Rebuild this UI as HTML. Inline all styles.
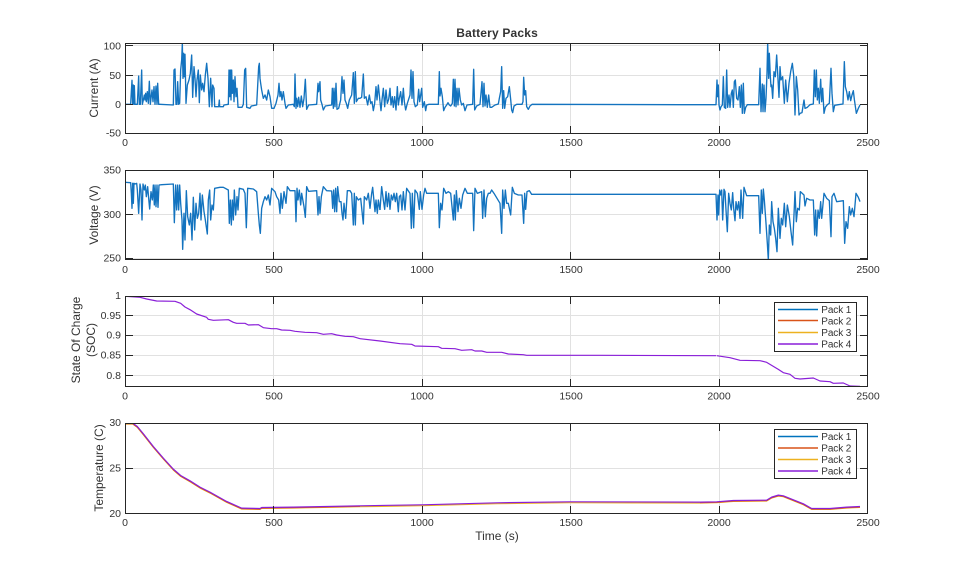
<!DOCTYPE html>
<html><head><meta charset="utf-8"><style>
html,body{margin:0;padding:0;background:#fff;width:959px;height:577px;overflow:hidden}
svg{display:block}
text{font-family:"Liberation Sans",Arial,sans-serif;fill:#333;font-size:10.5px}
.g{stroke:#e1e1e1;stroke-width:1;fill:none}
.a{stroke:#262626;stroke-width:1;fill:none}
.b{fill:none;stroke:#1373BF;stroke-width:1.35;stroke-linejoin:round;vector-effect:non-scaling-stroke}
.l{fill:none;stroke-width:1.2;stroke-linejoin:round;vector-effect:non-scaling-stroke}
.r{text-anchor:end}.lab{font-size:12px}
.k{stroke-width:1.5}
.t{font-size:10px}
</style></head><body>
<svg width="959" height="577" viewBox="0 0 959 577" xmlns="http://www.w3.org/2000/svg">
<defs>
<clipPath id="c1"><rect x="125" y="43" width="743" height="91"/></clipPath>
<clipPath id="c2"><rect x="125" y="170" width="743" height="90"/></clipPath>
<clipPath id="c3"><rect x="125" y="296" width="743" height="91"/></clipPath>
<clipPath id="c4"><rect x="125" y="423" width="743" height="91"/></clipPath>
</defs>

<!-- Grids -->
<path class="g" d="M273.5 44V133M422.5 44V133M570.5 44V133M719.5 44V133M126 45.5H867M126 75.5H867M126 104.5H867"/>
<path class="g" d="M273.5 171V259M422.5 171V259M570.5 171V259M719.5 171V259M126 214.5H867M126 258.5H867"/>
<path class="g" d="M273.5 296V386M422.5 296V386M570.5 296V386M719.5 296V386M126 315.5H867M126 335.5H867M126 355.5H867M126 375.5H867"/>
<path class="g" d="M273.5 423V513M422.5 423V513M570.5 423V513M719.5 423V513M126 468.5H867"/>

<!-- Current -->
<g clip-path="url(#c1)">
<polyline class="b" transform="translate(80 20) scale(.33333)" points="136,253 152,253 154,215 156,181 158,253 160,195 162,253 163,197 165,253 172,253 176,168 178,253 181,253 185,150 187,253 190,240 193,225 195,240 197,220 199,245 202,215 205,250 208,184 211,253 213,235 216,210 219,245 222,200 225,253 228,198 231,253 233,190 236,253 240,253 280,255 282,150 285,147 288,253 291,253 293,185 296,253 299,250 302,150 305,120 307,70 309,175 311,100 313,170 315,103 318,250 322,195 327,180 331,160 335,105 338,232 342,140 345,175 348,230 351,180 355,150 358,248 361,165 365,210 368,190 372,215 376,165 380,130 384,175 388,260 392,175 396,260 398,195 402,205 404,260 416,260 418,240 419,260 430,260 432,255 445,253 447,150 449,230 451,150 453,240 455,150 457,220 460,180 462,245 465,170 468,230 471,205 474,262 486,262 490,253 494,150 497,145 500,262 510,265 514,258 530,255 536,140 538,130 540,175 542,190 545,210 550,235 555,225 560,240 565,210 570,230 575,265 582,265 588,250 594,225 597,190 600,230 603,215 606,240 610,215 615,250 618,265 625,255 640,253 643,260 645,162 648,265 650,235 653,260 656,232 660,262 664,228 668,260 672,235 676,178 680,268 686,255 710,253 714,190 716,215 720,185 722,240 726,253 730,270 736,258 755,255 757,205 760,265 762,205 765,260 768,190 771,268 776,265 782,240 786,170 789,220 792,180 795,240 799,250 803,265 808,240 815,225 820,158 823,250 826,155 829,245 835,235 840,235 845,232 850,162 853,235 858,230 863,255 868,225 872,250 876,245 880,272 884,250 888,200 891,240 895,195 900,245"/>
<polyline class="b" transform="translate(380 20) scale(.33333)" points="0,245 3,272 6,240 10,205 14,260 18,210 22,250 26,238 30,205 33,255 37,230 40,262 44,230 48,270 52,200 55,255 58,235 62,215 66,255 70,205 73,245 77,270 82,250 90,225 93,150 96,235 99,155 102,245 106,260 112,255 116,208 119,245 125,205 128,262 133,245 137,272 140,255 147,253 175,253 178,155 180,228 183,205 187,230 191,272 195,262 200,255 204,248 208,255 212,258 217,250 220,178 223,258 225,178 228,260 231,205 234,255 237,205 241,240 245,255 250,250 255,272 261,255 278,253 281,148 284,270 290,258 300,253 306,185 309,260 312,190 315,258 318,225 322,262 326,225 330,262 335,262 345,255 355,252 358,235 362,215 365,140 368,265 371,212 374,265 378,235 383,230 388,200 392,238 395,270 398,278 402,258 410,253 426,253 429,245 431,172 434,225 437,212 440,260 445,268 450,258 456,253 900,254"/>
<polyline class="b" transform="translate(680 20) scale(.33333)" points="0,254 108,254 111,180 113,230 115,195 117,255 120,270 123,260 127,255 130,170 133,262 137,265 140,150 143,262 147,225 150,262 154,220 157,210 160,262 163,185 166,180 170,235 174,240 178,200 181,262 184,195 187,280 190,190 193,280 197,262 202,254 236,254 240,145 243,275 247,192 249,275 252,195 255,275 258,235 261,160 263,70 266,175 268,100 271,170 273,200 275,195 278,235 282,155 286,170 290,105 293,160 297,232 300,140 303,180 308,170 313,250 317,180 322,245 327,190 332,155 337,130 341,165 345,285 349,170 353,210 357,285 360,280 366,278 372,240 375,265 382,262 390,254 400,252 403,150 406,230 409,150 412,240 415,205 418,250 422,178 425,245 428,205 432,280 436,262 442,254 448,250 453,145 456,220 460,275 464,256 475,254 489,252 493,125 496,200 500,215 504,240 508,215 512,242 516,225 520,212 523,238 529,280 535,265 540,255"/>
</g>

<!-- Voltage -->
<g clip-path="url(#c2)">
<polyline class="b" transform="translate(80 160) scale(.33333)" points="136,67 152,68 154,100 156,145 158,70 160,130 162,70 165,72 170,70 172,90 176,160 180,72 183,90 186,180 189,72 193,90 196,75 199,110 203,80 206,115 209,147 213,95 217,120 220,75 223,135 225,75 228,140 231,75 234,142 237,75 245,74 280,72 283,188 287,75 290,150 293,75 296,150 299,75 302,130 306,180 308,268 312,160 315,240 319,92 323,170 328,195 332,160 336,240 340,112 344,210 348,130 352,175 356,160 360,100 363,180 367,105 372,155 376,180 382,222 385,120 389,90 392,180 396,135 400,150 404,85 420,82 430,82 445,90 448,190 451,120 454,195 457,120 460,180 463,90 467,165 471,110 474,150 478,85 490,88 495,100 499,203 503,85 520,87 530,95 535,160 538,195 541,220 545,145 550,125 555,110 560,120 565,105 570,135 575,85 585,95 590,110 596,120 600,160 603,100 607,145 612,95 618,130 622,80 630,92 645,92 648,185 651,85 654,120 658,90 662,135 665,100 672,140 676,172 680,80 686,94 710,92 714,165 717,110 720,160 724,110 730,80 740,92 755,93 758,145 761,90 764,155 767,85 770,155 773,80 778,125 783,125 786,160 789,180 792,130 797,175 802,92 810,92 815,100 820,195 823,100 826,195 829,110 835,120 842,115 850,192 853,110 860,120 865,100 870,145 875,100 878,82 885,155 888,120 892,160 895,120 900,150"/>
<polyline class="b" transform="translate(380 160) scale(.33333)" points="0,150 5,80 10,120 14,148 18,95 22,140 26,100 30,148 34,105 38,120 42,100 46,125 50,100 55,155 58,110 62,105 66,150 70,95 75,150 80,85 90,100 94,205 97,100 101,203 105,90 112,100 118,148 121,95 126,148 131,105 135,85 140,100 150,100 175,100 178,203 182,130 186,150 191,85 198,100 205,95 212,100 220,180 223,105 226,180 229,92 234,155 238,115 243,145 248,105 255,85 262,100 278,100 281,212 285,85 292,100 305,95 308,175 312,90 316,170 320,115 325,100 330,100 335,90 342,100 360,130 365,220 368,90 372,145 376,90 380,130 385,130 392,165 397,82 403,100 415,105 426,105 431,190 434,100 437,148 441,95 448,92 455,103 900,103"/>
<polyline class="b" transform="translate(680 160) scale(.33333)" points="0,103 108,103 111,180 114,105 116,165 119,90 122,105 125,90 128,180 132,88 135,95 138,150 142,215 146,100 150,130 154,150 158,98 161,145 165,182 168,125 172,150 176,125 180,175 183,90 188,175 192,82 200,107 236,107 240,220 244,90 247,160 250,87 253,120 258,190 262,250 265,300 268,195 272,225 275,125 279,185 283,205 287,235 291,275 295,145 300,235 304,175 308,195 313,130 317,200 322,135 328,170 333,215 338,255 345,95 349,185 353,145 358,150 361,95 372,105 375,138 380,115 390,120 400,120 404,225 407,150 410,228 414,150 418,175 422,125 425,175 432,100 440,115 448,122 453,230 456,110 462,100 470,125 490,122 494,250 498,185 503,205 508,140 512,165 517,145 522,170 528,100 535,112 540,125"/>
</g>

<!-- SOC -->
<g clip-path="url(#c3)">
<polyline class="l" stroke="#8A1FD8" transform="translate(60 285) scale(.33333)" points="196,34 240,37 260,42 290,48 345,49 362,55 375,66 390,74 410,87 440,97 445,103 460,106 505,104 520,112 530,115 555,115 565,120 595,119 610,128 635,131 650,131 665,135 690,136 705,139 735,142 770,143 790,148 815,146 830,150 855,154 880,155 900,161"/>
<polyline class="l" stroke="#8A1FD8" points="360,338.7 380,341 400,343.7 411.7,344.3 415,346 438.3,346.7 441.7,348.3 455,348.7 461.7,350.3 471.7,349.7 475,351 481.7,351 486.7,352.3 501.7,352.3 508.3,354 523.3,354.7 526.7,355.3 600,355.3 716,355.7"/>
<polyline class="l" stroke="#8A1FD8" transform="translate(700 285) scale(.33333)" points="50,212 90,218 120,226 180,227 200,232 235,253 250,263 270,268 285,280 300,282 340,279 360,288 390,290 400,295 430,294 450,303 480,304"/>
</g>

<!-- Temperature -->
<g clip-path="url(#c4)">
<g transform="translate(0 .7)">
<polyline class="l" stroke="#EDB120" transform="translate(60 410) scale(.33333)" points="196,40 218,40 232,50 250,72 280,110 310,145 340,178 362,197 390,213 420,232 450,247 500,275 545,295 600,296 605,293 700,292 900,288"/>
<polyline class="l" stroke="#EDB120" points="360,506 422,505 497,503 570,502 700,502.3"/>
<polyline class="l" stroke="#EDB120" transform="translate(700 410) scale(.33333)" points="0,277 50,276 100,272 200,271 215,262 235,256 250,258 280,270 310,282 335,296 390,296 440,292 480,290"/>
</g>
<g transform="translate(0 .3)">
<polyline class="l" stroke="#D95319" transform="translate(60 410) scale(.33333)" points="196,40 218,40 232,50 250,72 280,110 310,145 340,178 362,197 390,213 420,232 450,247 500,275 545,295 600,296 605,293 700,292 900,288"/>
<polyline class="l" stroke="#D95319" transform="translate(700 410) scale(.33333)" points="0,277 50,276 100,272 200,271 215,262 235,256 250,258 280,270 310,282 335,296 390,296 440,292 480,290"/>
</g>
<g transform="translate(0 -.2)">
<polyline class="l" stroke="#8A1FD8" transform="translate(60 410) scale(.33333)" points="196,40 218,40 232,50 250,72 280,110 310,145 340,178 362,197 390,213 420,232 450,247 500,275 545,295 600,296 605,293 700,292 900,288"/>
<polyline class="l" stroke="#8A1FD8" points="360,506 422,505 497,503 570,502 700,502.3"/>
<polyline class="l" stroke="#8A1FD8" transform="translate(700 410) scale(.33333)" points="0,277 50,276 100,272 200,271 215,262 235,256 250,258 280,270 310,282 335,296 390,296 440,292 480,290"/>
</g>
</g>

<!-- Axes boxes & ticks -->
<rect class="a" x="125.5" y="43.5" width="742" height="90"/>
<path class="a" d="M273.5 44v7M422.5 44v7M570.5 44v7M719.5 44v7M273.5 133v-7M422.5 133v-7M570.5 133v-7M719.5 133v-7M126 45.5h7M126 75.5h7M126 104.5h7M867 45.5h-7M867 75.5h-7M867 104.5h-7"/>
<rect class="a" x="125.5" y="170.5" width="742" height="89"/>
<path class="a" d="M273.5 171v7M422.5 171v7M570.5 171v7M719.5 171v7M273.5 259v-7M422.5 259v-7M570.5 259v-7M719.5 259v-7M126 214.5h7M126 258.5h7M867 214.5h-7M867 258.5h-7"/>
<rect class="a" x="125.5" y="296.5" width="742" height="90"/>
<path class="a" d="M273.5 297v7M422.5 297v7M570.5 297v7M719.5 297v7M273.5 386v-7M422.5 386v-7M570.5 386v-7M719.5 386v-7M126 315.5h7M126 335.5h7M126 355.5h7M126 375.5h7M867 315.5h-7M867 335.5h-7M867 355.5h-7M867 375.5h-7"/>
<rect class="a" x="125.5" y="423.5" width="742" height="90"/>
<path class="a" d="M273.5 424v7M422.5 424v7M570.5 424v7M719.5 424v7M273.5 513v-7M422.5 513v-7M570.5 513v-7M719.5 513v-7M126 468.5h7M867 468.5h-7"/>

<!-- Legends -->
<rect x="774.5" y="302.5" width="82" height="49" fill="#fff" stroke="#262626"/>
<path class="k" d="M778 309.5h40" stroke="#0072BD"/>
<path class="k" d="M778 320.5h40" stroke="#D95319"/>
<path class="k" d="M778 332.5h40" stroke="#EDB120"/>
<path class="k" d="M778 344h40" stroke="#8A1FD8"/>
<text class="t" x="821.3" y="313" textLength="30">Pack 1</text>
<text class="t" x="821.3" y="324.3" textLength="30">Pack 2</text>
<text class="t" x="821.3" y="336" textLength="30">Pack 3</text>
<text class="t" x="821.3" y="347.3" textLength="30">Pack 4</text>

<rect x="774.5" y="429.5" width="82" height="49" fill="#fff" stroke="#262626"/>
<path class="k" d="M778 436.5h40" stroke="#0072BD"/>
<path class="k" d="M778 448h40" stroke="#D95319"/>
<path class="k" d="M778 459.5h40" stroke="#EDB120"/>
<path class="k" d="M778 471h40" stroke="#8A1FD8"/>
<text class="t" x="821.3" y="440" textLength="30">Pack 1</text>
<text class="t" x="821.3" y="451.3" textLength="30">Pack 2</text>
<text class="t" x="821.3" y="463" textLength="30">Pack 3</text>
<text class="t" x="821.3" y="474.3" textLength="30">Pack 4</text>

<!-- X tick labels -->
<g>
<text x="125" y="146" text-anchor="middle">0</text><text x="274" y="146" text-anchor="middle">500</text><text x="422" y="146" text-anchor="middle">1000</text><text x="571" y="146" text-anchor="middle">1500</text><text x="719" y="146" text-anchor="middle">2000</text><text x="868" y="146" text-anchor="middle">2500</text>
<text x="125" y="273" text-anchor="middle">0</text><text x="274" y="273" text-anchor="middle">500</text><text x="422" y="273" text-anchor="middle">1000</text><text x="571" y="273" text-anchor="middle">1500</text><text x="719" y="273" text-anchor="middle">2000</text><text x="868" y="273" text-anchor="middle">2500</text>
<text x="125" y="399.5" text-anchor="middle">0</text><text x="274" y="399.5" text-anchor="middle">500</text><text x="422" y="399.5" text-anchor="middle">1000</text><text x="571" y="399.5" text-anchor="middle">1500</text><text x="719" y="399.5" text-anchor="middle">2000</text><text x="868" y="399.5" text-anchor="middle">2500</text>
<text x="125" y="526" text-anchor="middle">0</text><text x="274" y="526" text-anchor="middle">500</text><text x="422" y="526" text-anchor="middle">1000</text><text x="571" y="526" text-anchor="middle">1500</text><text x="719" y="526" text-anchor="middle">2000</text><text x="868" y="526" text-anchor="middle">2500</text>
</g>

<!-- Y tick labels -->
<text class="r" x="121" y="49.5">100</text><text class="r" x="121" y="79">50</text><text class="r" x="121" y="108">0</text><text class="r" x="121" y="136.7">-50</text>
<text class="r" x="121" y="173.5">350</text><text class="r" x="121" y="218">300</text><text class="r" x="121" y="261.7">250</text>
<text class="r" x="121" y="299">1</text><text class="r" x="121" y="319">0.95</text><text class="r" x="121" y="338.7">0.9</text><text class="r" x="121" y="358.7">0.85</text><text class="r" x="121" y="379">0.8</text>
<text class="r" x="121" y="426">30</text><text class="r" x="121" y="471.7">25</text><text class="r" x="121" y="517">20</text>

<!-- Axis labels and title -->
<text x="497" y="37" text-anchor="middle" textLength="81.5" style="font-size:12px;font-weight:bold">Battery Packs</text>
<text class="lab" x="497" y="540" text-anchor="middle">Time (s)</text>
<text class="lab" transform="translate(98 88) rotate(-90)" text-anchor="middle">Current (A)</text>
<text class="lab" transform="translate(98 215) rotate(-90)" text-anchor="middle">Voltage (V)</text>
<text class="lab" transform="translate(80 340) rotate(-90)" text-anchor="middle">State Of Charge</text>
<text class="lab" transform="translate(95 340) rotate(-90)" text-anchor="middle">(SOC)</text>
<text class="lab" transform="translate(103 468) rotate(-90)" text-anchor="middle">Temperature (C)</text>
</svg>
</body></html>
